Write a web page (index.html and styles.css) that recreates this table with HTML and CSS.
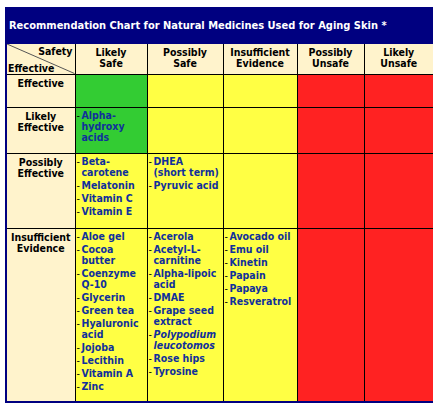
FILE: index.html
```html
<!DOCTYPE html>
<html lang="en">
<head>
    <meta charset="UTF-8">
    <title>Recommendation Chart for Natural Medicines Used for Aging Skin</title>
    <link rel="stylesheet" href="styles.css">
</head>
<body>

    <div class="chart">
        <div class="chart-title">Recommendation Chart for Natural Medicines Used for Aging Skin *</div>
        <table class="grid">
            <colgroup>
                <col class="c-head">
                <col class="c-ls">
                <col class="c-ps">
                <col class="c-ie">
                <col class="c-pu">
                <col class="c-lu">
            </colgroup>
            <tr class="r-head">
                <th class="corner">
                    <svg class="diag" viewBox="0 0 100 100" preserveAspectRatio="none"><line x1="0" y1="0" x2="100" y2="100"/></svg>
                    <span class="corner-top">Safety</span>
                    <span class="corner-bottom">Effective</span>
                </th>
                <th>Likely<br>Safe</th>
                <th>Possibly<br>Safe</th>
                <th>Insufficient<br>Evidence</th>
                <th>Possibly<br>Unsafe</th>
                <th>Likely<br>Unsafe</th>
            </tr>
            <tr class="r-eff">
                <th>Effective</th>
                <td class="green"></td>
                <td class="yellow"></td>
                <td class="yellow"></td>
                <td class="red"></td>
                <td class="red"></td>
            </tr>
            <tr class="r-likely">
                <th>Likely<br>Effective</th>
                <td class="green">
                    <ul>
                        <li><span class="dash">-</span><span>Alpha-hydroxy acids</span></li>
                    </ul>
                </td>
                <td class="yellow"></td>
                <td class="yellow"></td>
                <td class="red"></td>
                <td class="red"></td>
            </tr>
            <tr class="r-possibly">
                <th>Possibly<br>Effective</th>
                <td class="yellow">
                    <ul>
                        <li><span class="dash">-</span><span>Beta-carotene</span></li>
                        <li><span class="dash">-</span><span>Melatonin</span></li>
                        <li><span class="dash">-</span><span>Vitamin C</span></li>
                        <li><span class="dash">-</span><span>Vitamin E</span></li>
                    </ul>
                </td>
                <td class="yellow">
                    <ul>
                        <li><span class="dash">-</span><span>DHEA<br>(short term)</span></li>
                        <li><span class="dash">-</span><span>Pyruvic acid</span></li>
                    </ul>
                </td>
                <td class="yellow"></td>
                <td class="red"></td>
                <td class="red"></td>
            </tr>
            <tr class="r-insuff">
                <th>Insufficient<br>Evidence</th>
                <td class="yellow">
                    <ul>
                        <li><span class="dash">-</span><span>Aloe gel</span></li>
                        <li><span class="dash">-</span><span>Cocoa<br>butter</span></li>
                        <li><span class="dash">-</span><span>Coenzyme<br>Q-10</span></li>
                        <li><span class="dash">-</span><span>Glycerin</span></li>
                        <li><span class="dash">-</span><span>Green tea</span></li>
                        <li><span class="dash">-</span><span>Hyaluronic<br>acid</span></li>
                        <li><span class="dash">-</span><span>Jojoba</span></li>
                        <li><span class="dash">-</span><span>Lecithin</span></li>
                        <li><span class="dash">-</span><span>Vitamin A</span></li>
                        <li><span class="dash">-</span><span>Zinc</span></li>
                    </ul>
                </td>
                <td class="yellow">
                    <ul>
                        <li><span class="dash">-</span><span>Acerola</span></li>
                        <li><span class="dash">-</span><span>Acetyl-L-<br>carnitine</span></li>
                        <li><span class="dash">-</span><span>Alpha-lipoic<br>acid</span></li>
                        <li><span class="dash">-</span><span>DMAE</span></li>
                        <li><span class="dash">-</span><span>Grape seed<br>extract</span></li>
                        <li><span class="dash">-</span><span><em>Polypodium<br>leucotomos</em></span></li>
                        <li><span class="dash">-</span><span>Rose hips</span></li>
                        <li><span class="dash">-</span><span>Tyrosine</span></li>
                    </ul>
                </td>
                <td class="yellow">
                    <ul>
                        <li><span class="dash">-</span><span>Avocado oil</span></li>
                        <li><span class="dash">-</span><span>Emu oil</span></li>
                        <li><span class="dash">-</span><span>Kinetin</span></li>
                        <li><span class="dash">-</span><span>Papain</span></li>
                        <li><span class="dash">-</span><span>Papaya</span></li>
                        <li><span class="dash">-</span><span>Resveratrol</span></li>
                    </ul>
                </td>
                <td class="red"></td>
                <td class="red"></td>
            </tr>
        </table>
    </div>

</body>
</html>
```

FILE: styles.css
```css
body {
    margin: 7px 0 0 5px;
    background-color: #fff;
    font-family: "DejaVu Sans Condensed", "DejaVu Sans", sans-serif;
}

.chart {
    width: 428px;
    background-color: #000080;
    box-sizing: border-box;
    padding: 0 0 2px 2px;
}

.chart-title {
    height: 37px;
    line-height: 37px;
    padding-left: 2px;
    color: #fff;
    font-weight: bold;
    font-size: 11px;
    white-space: nowrap;
}

.grid {
    border-collapse: collapse;
    table-layout: fixed;
    width: 426px;
    font-size: 10.5px;
    line-height: 11px;
    font-weight: bold;
}

.c-head { width: 68px; }
.c-ls { width: 72px; }
.c-ps { width: 76px; }
.c-ie { width: 74px; }
.c-pu { width: 67px; }
.c-lu { width: 69px; }

.grid th,
.grid td {
    border: 1px solid #000;
    vertical-align: top;
    padding: 0;
}

.grid tr > *:first-child { border-left: none; }
.grid tr > *:last-child { border-right: none; }
.grid tr:first-child > * { border-top: none; }
.grid tr:last-child > * { border-bottom: none; }

.grid th {
    background-color: #fff3cc;
    color: #000;
    text-align: center;
    padding-top: 3px;
}

.r-head { height: 30px; }
.r-eff { height: 33px; }
.r-likely { height: 46px; }
.r-possibly { height: 75px; }
.r-insuff { height: 173px; }

.corner {
    position: relative;
    overflow: hidden;
}

.diag {
    position: absolute;
    left: 0;
    top: 0;
    width: 100%;
    height: 100%;
}

.diag line {
    stroke: #555;
    stroke-width: 1;
    vector-effect: non-scaling-stroke;
}

.corner-top {
    position: absolute;
    right: 2px;
    top: 2px;
}

.corner-bottom {
    position: absolute;
    left: 1px;
    bottom: 0;
}

.green { background-color: #33cc33; }
.yellow { background-color: #ffff44; }
.red { background-color: #ff2222; }

.grid ul {
    list-style: none;
    margin: 0;
    padding: 2px 1px 0 1px;
}

.grid li {
    display: flex;
    color: #10309c;
    margin-bottom: 2px;
}

.grid li .dash {
    color: #000;
    font-weight: normal;
    width: 5px;
    flex: none;
}

.grid em {
    font-style: italic;
}
```
